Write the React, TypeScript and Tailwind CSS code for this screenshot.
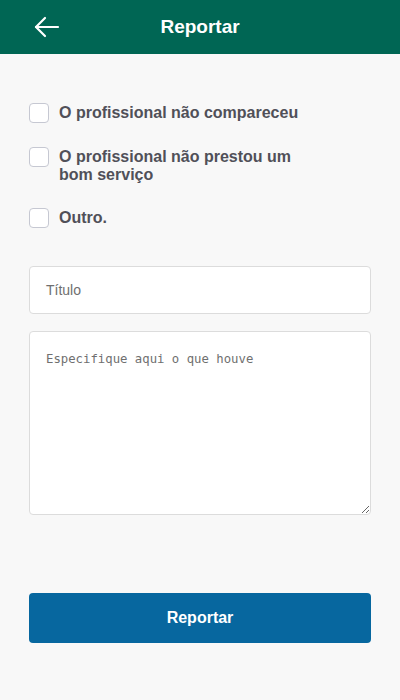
import React from "react";

function Row({ label }: { label: React.ReactNode }) {
  return (
    <label className="flex items-start gap-[10px]">
      <span className="w-5 h-5 shrink-0 rounded-[4px] border border-[#c6c8d2] bg-white" />
      <span className="w-[260px] text-[16px] leading-[18px] font-bold text-[#505058] mt-[1px]">{label}</span>
    </label>
  );
}

export default function App() {
  return (
    <div className="w-[400px] h-[700px] bg-[#f8f8f8] flex flex-col" style={{ fontFamily: '"Liberation Sans", Arial, sans-serif' }}>
      <div className="h-[54px] bg-[#006654] flex items-center relative">
        <svg className="absolute left-[33px] top-[15px]" width="27" height="24" viewBox="0 0 27 24" fill="none" stroke="white" strokeWidth="2.2" strokeLinecap="round" strokeLinejoin="round">
          <path d="M25 12H3" />
          <path d="M12 3L3 12L12 21" />
        </svg>
        <div className="w-full text-center text-white font-bold text-[19px]">Reportar</div>
      </div>
      <div className="px-[29px] pt-[49px] flex flex-col">
        <div className="flex flex-col gap-6">
          <Row label="O profissional não compareceu" />
          <Row label="O profissional não prestou um bom serviço" />
          <Row label="Outro." />
        </div>
        <div className="mt-[38px] h-[48px] rounded-[4px] border border-[#dcdcdc] bg-white flex items-center px-[16px] text-[14px] text-[#6f6f6f]">
          Título
        </div>
        <textarea
          className="mt-[17px] h-[184px] rounded-[4px] border border-[#dcdcdc] bg-white px-[16px] pt-[18px] text-[12.3px] placeholder:text-[#6f6f6f] outline-none"
          style={{ fontFamily: '"DejaVu Sans Mono", monospace' }}
          placeholder="Especifique aqui o que houve"
        />
        <button className="mt-[78px] h-[50px] rounded-[4px] bg-[#07679f] text-white font-bold text-[16px]">
          Reportar
        </button>
      </div>
    </div>
  );
}
